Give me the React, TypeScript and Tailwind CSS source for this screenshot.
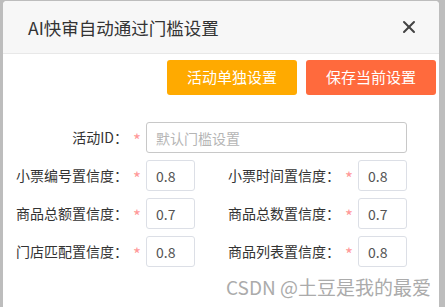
import { X } from "lucide-react";

const font = { fontFamily: '"Noto Sans CJK SC", "Noto Sans", sans-serif' };

function Field({ label, value }: { label: string; value: string }) {
  return (
    <input
      readOnly
      value={value}
      aria-label={label}
      className="h-[31px] w-[49px] rounded-[3px] border border-[#dcdfe6] bg-white px-[9px] text-[14px] text-[#555] outline-none"
    />
  );
}

function Star() {
  return <span className="flex w-[18px] justify-center pt-[4px] text-[17px] leading-none text-[#f99]">*</span>;
}

const rows = [
  ["小票编号置信度：", "0.8", "小票时间置信度：", "0.8"],
  ["商品总额置信度：", "0.7", "商品总数置信度：", "0.7"],
  ["门店匹配置信度：", "0.8", "商品列表置信度：", "0.8"],
];

export default function App() {
  return (
    <div className="h-[307px] w-[445px] overflow-hidden bg-[#bdbdbd] pl-[3px] pr-[6px] pt-[1px]" style={font}>
      <div className="relative h-full rounded-t-[4px] bg-white">
        {/* header */}
        <div className="flex h-[53px] items-center justify-between rounded-t-[4px] border-b border-[#e8e8e8] bg-[#f7f7f7] pl-[25px] pr-[20px]">
          <span className="pt-[2px] text-[17.5px] text-[#333]">AI快审自动通过门槛设置</span>
          <X className="h-[20px] w-[20px] text-[#444]" strokeWidth={2.4} />
        </div>

        {/* actions */}
        <div className="mt-[6px] flex justify-end gap-[9px] pr-[3px]">
          <button className="h-[35px] w-[130px] rounded-[3px] bg-[#ffaa00] text-[15px] text-white">活动单独设置</button>
          <button className="h-[35px] w-[130px] rounded-[3px] bg-[#ff6a3d] text-[15px] text-white">保存当前设置</button>
        </div>

        {/* form */}
        <div className="mt-[27px] flex flex-col gap-[7px]">
          <div className="flex items-center">
            <span className="w-[125px] text-right text-[14px] text-[#333]">活动ID：</span>
            <Star />
            <input
              readOnly
              placeholder="默认门槛设置"
              className="h-[31px] w-[261px] rounded-[3px] border border-[#c8c8c8] bg-white px-[9px] text-[14px] text-[#555] outline-none placeholder:text-[#b5b5b5]"
            />
          </div>
          {rows.map(([l1, v1, l2, v2]) => (
            <div key={l1} className="flex items-center">
              <span className="w-[125px] text-right text-[14px] text-[#333]">{l1}</span>
              <Star />
              <Field label={l1} value={v1} />
              <span className="w-[145px] text-right text-[14px] text-[#333]">{l2}</span>
              <Star />
              <Field label={l2} value={v2} />
            </div>
          ))}
        </div>

        {/* watermark */}
        <div className="absolute bottom-[6px] right-[8px] text-[19px] text-[#ababab]">CSDN @土豆是我的最爱</div>
      </div>
    </div>
  );
}
